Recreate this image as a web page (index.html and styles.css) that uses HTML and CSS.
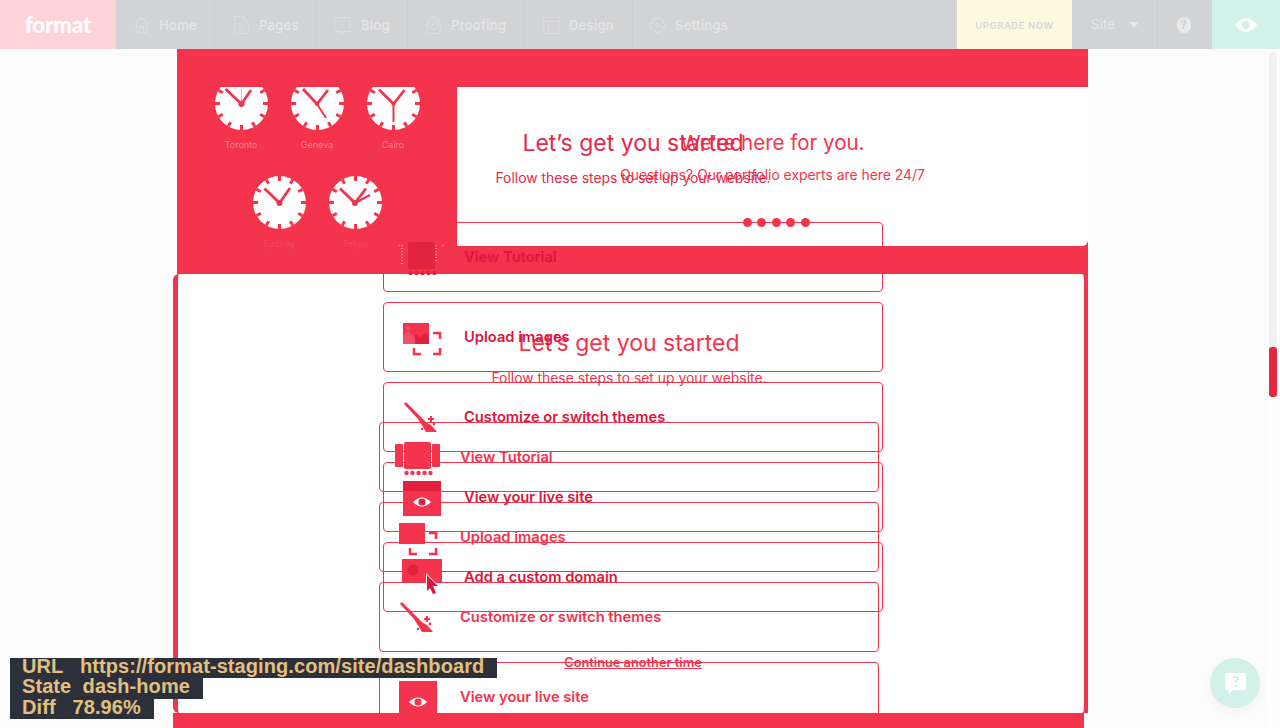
FILE: index.html
```html
<!DOCTYPE html>
<html lang="en">
<head>
<meta charset="utf-8">
<title>Format dashboard</title>
<link rel="stylesheet" href="styles.css">
</head>
<body>
<svg class="defs" width="0" height="0" aria-hidden="true">
  <defs>
    <symbol id="clock-face" viewBox="0 0 53 53">
      <circle cx="26.5" cy="26.5" r="26.5" fill="#fff"/>
      <g class="ticks">
        <path d="M26.5 0V5M26.5 48V53M0 26.5H5M48 26.5H53M13.2 3.5L15.700 7.800M39.800 3.500L37.300 7.800M13.200 49.500L15.700 45.200M39.800 49.500L37.300 45.200M3.500 13.200L7.800 15.700M3.500 39.800L7.800 37.300M49.500 13.200L45.200 15.700M49.500 39.800L45.200 37.300"/>
      </g>
    </symbol>
    <symbol id="i-tutorial" viewBox="0 0 52 60">
      <rect x="1" y="17" width="8" height="23" rx="1"/>
      <rect x="38" y="17" width="8" height="23" rx="1"/>
      <path class="i-speck" d="M4 18V38M1 18V19M38 18V34M45 18V19"/>
      <rect class="i-main" x="10" y="15" width="27" height="27" rx="2"/>
      <g class="i-main"><circle cx="12.5" cy="46" r="2.2"/><circle cx="18.5" cy="46" r="2.2"/><circle cx="24.5" cy="46" r="2.2"/><circle cx="30.5" cy="46" r="2.2"/><circle cx="36.5" cy="46" r="2.2"/></g>
    </symbol>
    <symbol id="i-upload" viewBox="0 0 52 60">
      <rect x="5" y="16" width="26" height="21"/>
      <path class="i-soft" d="M5 37V29L10 24L17 31V37Z"/>
      <path class="i-shade" d="M17 37V27L22 31L27 26L31 29V37Z"/>
      <circle class="i-soft" cx="10" cy="21" r="2.5"/>
      <path class="i-line" d="M35 26H42V32M16 41V47H23M42 41V47H35"/>
    </symbol>
    <symbol id="i-brush" viewBox="0 0 52 60">
      <path d="M6 17L8 15L22 29L29 36L33 38L39 45L28 45L25 40L20 32Z"/>
      <path d="M32 29H34V31H36V33H34V35H32V33H30V31H32Z"/>
      <circle cx="36" cy="37" r="1.4"/><circle cx="24" cy="42" r="1.2"/>
    </symbol>
    <symbol id="i-live" viewBox="0 0 52 60">
      <rect x="5" y="14" width="38" height="35"/>
      <rect class="i-shade" x="5" y="14" width="38" height="10"/>
      <path class="i-eye" d="M15 35Q24 26 33 35Q24 44 15 35Z"/>
      <circle class="i-pupil" cx="24" cy="35" r="3.6"/>
    </symbol>
    <symbol id="i-domain" viewBox="0 0 52 60">
      <rect x="4" y="12" width="40" height="24"/>
      <circle class="i-shade" cx="15" cy="23" r="5.5"/>
      <path class="i-halo" d="M28 26L42 40H36L39 47L35 48L32 42L28 46Z"/>
      <path class="i-cursor" d="M29 28L40 39H35L38 46L35 47L32 41L29 44Z"/>
    </symbol>
  </defs>
</svg>

<header class="nav">
  <a class="logo">format</a>
  <a class="nav-item home">
    <svg class="nav-icon" viewBox="0 0 18 20"><path d="M1 10L9 2L17 10M3.5 8.5V18H7V12H11V18H14.5V8.5"/></svg>Home</a>
  <a class="nav-item pages">
    <svg class="nav-icon" viewBox="0 0 18 20"><path d="M2 1H11L16 6V19H2ZM11 1V6H16M5 9H13M5 12H13M5 15H13"/></svg>Pages</a>
  <a class="nav-item blog">
    <svg class="nav-icon" viewBox="0 0 18 20"><path d="M1 2H17V17H11L9 19L7 17H1Z"/></svg>Blog</a>
  <a class="nav-item proofing">
    <svg class="nav-icon" viewBox="0 0 18 20"><path d="M2 19V8A7 7 0 0 1 16 8V19ZM9 4A4.5 5.5 0 0 1 9 15A4.5 5.5 0 0 1 9 4ZM7 12L11 6"/></svg>Proofing</a>
  <a class="nav-item design">
    <svg class="nav-icon" viewBox="0 0 18 20"><path d="M1 2H17V19H1ZM1 6H17M6 6V19"/></svg>Design</a>
  <a class="nav-item settings">
    <svg class="nav-icon" viewBox="0 0 18 20"><path d="M7.5 2H10.5L11 4.5L13.4 3.4L15.6 5.6L14.5 8L17 8.5V11.5L14.5 12L15.6 14.4L13.4 16.6L11 15.5L10.5 18H7.500L7 15.500L4.600 16.600L2.400 14.400L3.500 12L1 11.500V8.500L3.500 8L2.400 5.600L4.600 3.400L7 4.500Z"/><circle cx="9" cy="10" r="2"/></svg>Settings</a>
  <a class="upgrade">UPGRADE NOW</a>
  <a class="site">Site<span class="caret"></span></a>
  <a class="help-btn"><span>?</span></a>
  <a class="preview">
    <svg class="preview-eye" viewBox="0 0 26 18"><path fill-rule="evenodd" d="M1 9Q13 -6 25 9Q13 24 1 9ZM13 4.500A4.500 4.500 0 1 0 13 13.500A4.500 4.500 0 1 0 13 4.500Z"/></svg>
  </a>
</header>

<main class="stage">
  <div class="sheet">
    <div class="clocks">
      <figure class="clock clipped">
        <svg class="clock-svg" viewBox="0 10 53 43"><use href="#clock-face" width="53" height="53"/><path class="hand" d="M26.500 27L10.500 12M26.500 27L36 13"/><path class="hair" d="M26.500 27V10"/><circle class="hub" cx="26.500" cy="27" r="3"/></svg>
        <figcaption>Toronto</figcaption>
      </figure>
      <figure class="clock clipped">
        <svg class="clock-svg" viewBox="0 10 53 43"><use href="#clock-face" width="53" height="53"/><path class="hand" d="M26 27L12 12M26 27L37 13"/><path class="second" d="M26 27L35 41"/><circle class="hub" cx="26" cy="27" r="2"/></svg>
        <figcaption>Geneva</figcaption>
      </figure>
      <figure class="clock clipped">
        <svg class="clock-svg" viewBox="0 10 53 43"><use href="#clock-face" width="53" height="53"/><path class="hand" d="M26.500 27L12 12.500M26.500 27L37.500 13"/><path class="second" d="M26.500 27V45"/><circle class="hub" cx="26.500" cy="27" r="2"/></svg>
        <figcaption>Cairo</figcaption>
      </figure>
      <figure class="clock">
        <svg class="clock-svg" viewBox="0 0 53 53"><use href="#clock-face" width="53" height="53"/><path class="hand" d="M26.500 27L11.500 12.500M26.500 27L37 12"/><circle class="hub" cx="26.500" cy="27" r="3"/></svg>
        <figcaption class="faint">Sydney</figcaption>
      </figure>
      <figure class="clock">
        <svg class="clock-svg" viewBox="0 0 53 53"><use href="#clock-face" width="53" height="53"/><path class="hand" d="M26 27L11 12.500M26 27L37 12.500"/><path class="second" d="M26 27L41 19"/><circle class="hub" cx="26" cy="27" r="3"/></svg>
        <figcaption class="faint">Tokyo</figcaption>
      </figure>
    </div>
    <section class="help">
      <h2 class="help-title">We’re here for you.</h2>
      <p class="help-sub">Questions? Our portfolio experts are here 24/7</p>
      <div class="dots"><i></i><i></i><i></i><i></i><i></i></div>
    </section>
  </div>

  <div class="frame"></div>

  <section class="onboard onboard-b">
    <h1 class="ob-title">Let’s get you started</h1>
    <p class="ob-sub">Follow these steps to set up your website.</p>
    <ul class="ob-rows">
      <li class="ob-row"><svg class="ob-icon"><use href="#i-tutorial"/></svg><span class="ob-label">View Tutorial</span></li>
      <li class="ob-row"><svg class="ob-icon"><use href="#i-upload"/></svg><span class="ob-label">Upload images</span></li>
      <li class="ob-row"><svg class="ob-icon"><use href="#i-brush"/></svg><span class="ob-label">Customize or switch themes</span></li>
      <li class="ob-row"><svg class="ob-icon"><use href="#i-live"/></svg><span class="ob-label">View your live site</span></li>
    </ul>
  </section>

  <div class="band"></div>

  <section class="onboard onboard-a">
    <h1 class="ob-title">Let’s get you started</h1>
    <p class="ob-sub">Follow these steps to set up your website.</p>
    <ul class="ob-rows">
      <li class="ob-row"><svg class="ob-icon"><use href="#i-tutorial"/></svg><span class="ob-label">View Tutorial</span></li>
      <li class="ob-row"><svg class="ob-icon"><use href="#i-upload"/></svg><span class="ob-label">Upload images</span></li>
      <li class="ob-row"><svg class="ob-icon"><use href="#i-brush"/></svg><span class="ob-label">Customize or switch themes</span></li>
      <li class="ob-row"><svg class="ob-icon"><use href="#i-live"/></svg><span class="ob-label">View your live site</span></li>
      <li class="ob-row"><svg class="ob-icon"><use href="#i-domain"/></svg><span class="ob-label">Add a custom domain</span></li>
    </ul>
    <a class="ob-later">Continue another time</a>
  </section>

  <div class="scrollbar"><div class="scroll-track"></div><div class="scroll-thumb"></div></div>

  <button class="chat" aria-label="Help chat">
    <svg class="chat-icon" viewBox="0 0 24 24"><path d="M3 1H21A2 2 0 0 1 23 3V17A2 2 0 0 1 21 19H9L5 23V19H3A2 2 0 0 1 1 17V3A2 2 0 0 1 3 1Z"/><text class="chat-q" x="12" y="15.500">?</text></svg>
  </button>
</main>

<aside class="debug">
  <div class="debug-line">URL   https://format-staging.com/site/dashboard</div>
  <div class="debug-line">State  dash-home</div>
  <div class="debug-line">Diff   78.96%</div>
</aside>
</body>
</html>
```

FILE: styles.css
```css
* { box-sizing: border-box; }
html, body { margin: 0; height: 728px; overflow: hidden; }
body {
  position: relative;
  background: #fcfcfc;
  font-family: "Inter", "Noto Sans", sans-serif;
  color: #f4334d;
}
.defs { position: absolute; }

/* top navigation */
.nav {
  display: flex;
  height: 49px;
  background: #d2d3d5;
  color: #e6e7e8;
  font-size: 13px;
  font-weight: 500;
  letter-spacing: .3px;
}
.logo {
  display: flex;
  align-items: center;
  justify-content: center;
  width: 116px;
  padding-bottom: 1px;
  background: #ffd3d7;
  color: #fff;
  font-family: "Lato", sans-serif;
  font-size: 22px;
  font-weight: 900;
  letter-spacing: 0;
}
.nav-item {
  display: flex;
  align-items: center;
  gap: 9px;
  padding-left: 17px;
  border-right: 1px solid #cdced0;
}
.home { width: 99px; }
.pages { width: 102px; padding-left: 18px; }
.blog { width: 91px; gap: 10px; }
.proofing { width: 117px; }
.design { width: 108px; padding-left: 18px; }
.settings { flex: 1; border-right: 0; padding-left: 16px; }
.nav-icon {
  width: 17px;
  height: 20px;
  fill: none;
  stroke: #dcddde;
  stroke-width: 1.100;
}
.upgrade {
  display: flex;
  align-items: center;
  justify-content: center;
  width: 115px;
  padding-top: 2px;
  background: #fef9e0;
  color: #d5d6d4;
  font-size: 9.500px;
  font-weight: 600;
  letter-spacing: .55px;
}
.site {
  display: flex;
  align-items: center;
  gap: 15px;
  width: 86px;
  padding: 0 0 2px 19px;
  border-right: 1px solid #cdced0;
  font-weight: 400;
}
.caret {
  width: 0;
  height: 0;
  margin: 3px 0 0 -1px;
  border: 5px solid transparent;
  border-top: 6px solid #e6e7e8;
  border-bottom: 0;
}
.help-btn {
  display: flex;
  align-items: center;
  justify-content: center;
  width: 54px;
  padding-right: 3px;
}
.help-btn span {
  width: 14px;
  height: 16px;
  border-radius: 7px;
  background: #e9eaeb;
  color: #d2d3d5;
  font-size: 12px;
  font-weight: 800;
  line-height: 16px;
  text-align: center;
  letter-spacing: 0;
}
.preview {
  display: flex;
  align-items: center;
  justify-content: center;
  width: 68px;
  background: #d2f1e9;
}
.preview-eye { width: 24px; height: 20px; fill: #fff; }

/* stage: layered panels that overlap each other */
.stage {
  position: relative;
  height: 679px;
  overflow: hidden;
}
.sheet {
  position: absolute;
  left: 177px;
  top: 0;
  display: flex;
  width: 911px;
  height: 664px;
  padding-top: 38px;
  background: #f4334d;
  align-items: flex-start;
}
.clocks {
  display: flex;
  flex-wrap: wrap;
  justify-content: center;
  align-content: flex-start;
  gap: 0 23px;
  width: 280px;
}
.clock { margin: 0; width: 53px; }
.clock-svg { display: block; width: 53px; height: 53px; }
.clipped .clock-svg { height: 43px; }
.clock figcaption {
  height: 46px;
  margin: 0 -10px;
  padding-top: 9px;
  color: #fff;
  font-size: 9px;
  line-height: 12px;
  text-align: center;
  opacity: .35;
}
.clock figcaption.faint { opacity: .1; }
.ticks path { fill: none; stroke: #f4334d; stroke-width: 3; }
.hand { fill: none; stroke: #f4334d; stroke-width: 2.800; }
.second { fill: none; stroke: #f4334d; stroke-width: 2; }
.hair { fill: none; stroke: #f9a3ae; stroke-width: .8; }
.hub { fill: #f4334d; }

.help {
  display: flex;
  flex-direction: column;
  align-items: center;
  flex: 1;
  height: 159px;
  padding: 38px 0 19px;
  background: #fff;
  border-radius: 0 0 6px 0;
}
.help-title {
  margin: 0;
  font-size: 20.500px;
  font-weight: 400;
  line-height: 36px;
}
.help-sub {
  margin: 4px 0 0;
  font-size: 13.900px;
  line-height: 20px;
}
.dots { display: flex; gap: 5.500px; margin: auto 0 0 7px; }
.dots i { width: 9px; height: 9px; border-radius: 50%; background: #f4334d; }

.frame {
  position: absolute;
  left: 173px;
  top: 225px;
  width: 915px;
  height: 439px;
  background: #fff;
  border: solid #f4334d;
  border-width: 0 4px 0 5px;
  border-radius: 6px;
}
.band {
  position: absolute;
  left: 173px;
  top: 664px;
  width: 911px;
  height: 15px;
  background: #f4334d;
}

/* onboarding list, drawn twice at an offset */
.onboard {
  position: absolute;
  display: flex;
  flex-direction: column;
  align-items: center;
  width: 500px;
  fill: #f4334d;
  --row-text: #f4334d;
  --main: #f4334d;
  --shade: #f4334d;
  --soft: #f4334d;
  --speck: transparent;
}
.onboard-a {
  left: 383px;
  top: 76px;
  --row-text: #d9163c;
  --main: #e3243f;
  --shade: #e2203f;
  --soft: #f0506a;
  --speck: #fff;
}
.onboard-b { left: 379px; top: 276px; }
.onboard-a .ob-title { color: #e4294a; }
.ob-title {
  margin: 0;
  font-size: 23px;
  font-weight: 400;
  line-height: 36px;
}
.ob-sub {
  margin: 7px 0 0;
  font-size: 13.900px;
  line-height: 20px;
}
.onboard-a .ob-sub { color: #e4294a; }
.ob-rows {
  display: flex;
  flex-direction: column;
  gap: 10px;
  width: 100%;
  margin: 34px 0 0;
  padding: 0;
  list-style: none;
}
.ob-row {
  display: flex;
  align-items: center;
  gap: 14px;
  height: 70px;
  padding-left: 14px;
  border: 1px solid #f4334d;
  border-radius: 4px;
  color: var(--row-text);
  font-size: 14.700px;
  font-weight: 600;
}
.ob-label { margin-bottom: 0; }
.ob-icon { width: 52px; height: 60px; flex: none; }
.i-main { fill: var(--main); }
.i-shade { fill: var(--shade); }
.i-soft { fill: var(--soft); }
.i-speck { fill: none; stroke: var(--speck); stroke-width: .8; stroke-dasharray: 1 2; }
.i-line { fill: none; stroke: #f4334d; stroke-width: 2.500; }
.i-eye { fill: #fff; }
.i-pupil { fill: var(--shade); }
.i-halo { fill: #fff; }
.i-cursor { fill: #d9163c; }
.ob-later {
  margin-top: 41px;
  color: #f4334d;
  font-size: 12.800px;
  font-weight: 600;
  line-height: 20px;
  text-decoration: underline;
}

/* scrollbar */
.scrollbar {
  position: absolute;
  right: 0;
  top: 0;
  width: 14px;
  height: 679px;
  background: #fefefe;
}
.scroll-track {
  position: absolute;
  left: 3px;
  top: 3px;
  width: 8px;
  height: 297px;
  border-radius: 4px;
  background: #f1f1f1;
}
.scroll-thumb {
  position: absolute;
  left: 3px;
  top: 298px;
  width: 8px;
  height: 50px;
  border-radius: 3px;
  background: #e8263f;
}

/* chat */
.chat {
  position: absolute;
  left: 1210px;
  top: 609px;
  display: flex;
  align-items: center;
  justify-content: center;
  width: 50px;
  height: 50px;
  padding: 0;
  border: 0;
  border-radius: 50%;
  background: #d2f1e9;
  box-shadow: 0 4px 12px rgba(0, 0, 0, .04);
}
.chat-icon { width: 23px; height: 23px; fill: #fff; }
.chat-q {
  fill: #d2f1e9;
  font-family: "Lato", sans-serif;
  font-size: 15px;
  font-weight: 900;
  text-anchor: middle;
}

/* debug caption */
.debug {
  position: absolute;
  left: 10px;
  top: 658px;
  color: #e3c07f;
  font-family: "Liberation Sans", sans-serif;
  font-size: 20px;
  font-weight: 700;
  line-height: 17px;
  letter-spacing: .08px;
}
.debug-line {
  width: fit-content;
  height: 20.300px;
  padding: 0 13px 0 12px;
  background: #2b303b;
  white-space: pre;
}
```
